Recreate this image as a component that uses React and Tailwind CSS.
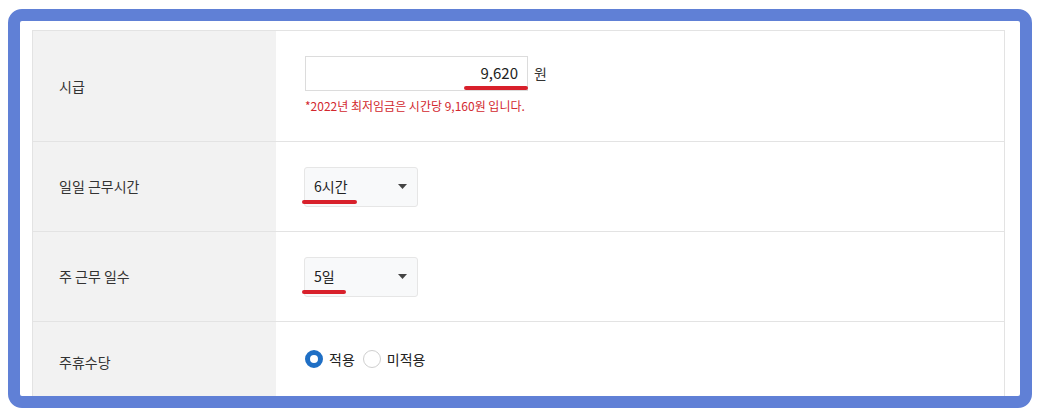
import React from "react";

const font = { fontFamily: '"Noto Sans CJK KR", "Noto Sans", sans-serif' };

const Caret = () => (
  <svg width="9" height="5" viewBox="0 0 9 5" className="text-[#444]">
    <path d="M0 0 L9 0 L4.5 5 Z" fill="currentColor" />
  </svg>
);

const Row = ({ label, h, children, last }) => (
  <div className={`flex ${last ? "" : "border-b border-[#e3e3e3]"} ${h}`}>
    <div className="w-[243px] shrink-0 bg-[#f2f2f2] flex items-center pl-[26px] text-[14px] text-[#333]">
      {label}
    </div>
    <div className="flex-1 pl-[29px] flex flex-col justify-center">{children}</div>
  </div>
);

const Select = ({ value, line }) => (
  <div className="relative w-[114px] h-[40px] border border-[#e6e6e6] rounded-[3px] bg-[#f8f9fa] flex items-center justify-between pl-[9px] pr-[10px] -ml-[1px]">
    <span className="text-[14px] text-[#222]">{value}</span>
    <Caret />
    <div className={`absolute left-[-3px] bottom-[2px] h-[4px] ${line} rounded-full bg-[#d8202b]`} />
  </div>
);

export default function App() {
  return (
    <div className="w-[1040px] h-[412px] bg-white pt-[9px] pl-[8px]" style={font}>
      <div className="w-[1024px] h-[399px] border-[12px] border-[#6080d6] rounded-[14px] bg-white overflow-hidden pl-[12px] pt-[9px]">
        <div className="w-[973px] border border-[#e3e3e3]">
          <Row label="시급" h="h-[111px]">
            <div className="flex items-center gap-[6px] -mt-[2px]">
              <div className="relative w-[223px] h-[35px] border border-[#dcdcdc] bg-white flex items-center justify-end pr-[9px]">
                <span className="text-[15px] text-[#222]">9,620</span>
                <div className="absolute right-[-1px] bottom-[0px] w-[64px] h-[4px] rounded-full bg-[#d8202b]" />
              </div>
              <span className="text-[14px] text-[#333]">원</span>
            </div>
            <p className="mt-[6px] text-[12px] text-[#d2282e]">*2022년 최저임금은 시간당 9,160원 입니다.</p>
          </Row>
          <Row label="일일 근무시간" h="h-[90px]">
            <Select value="6시간" line="w-[55px]" />
          </Row>
          <Row label="주 근무 일수" h="h-[90px]">
            <Select value="5일" line="w-[44px]" />
          </Row>
          <Row label="주휴수당" h="h-[80px]" last>
            <div className="flex items-center -mt-[6px]">
              <span className="w-[18px] h-[18px] rounded-full border-[5px] border-[#1f6fc5] bg-white" />
              <span className="ml-[6px] text-[14px] text-[#222]">적용</span>
              <span className="ml-[8px] w-[18px] h-[18px] rounded-full border border-[#cfcfcf] bg-white" />
              <span className="ml-[6px] text-[14px] text-[#222]">미적용</span>
            </div>
          </Row>
        </div>
      </div>
    </div>
  );
}
